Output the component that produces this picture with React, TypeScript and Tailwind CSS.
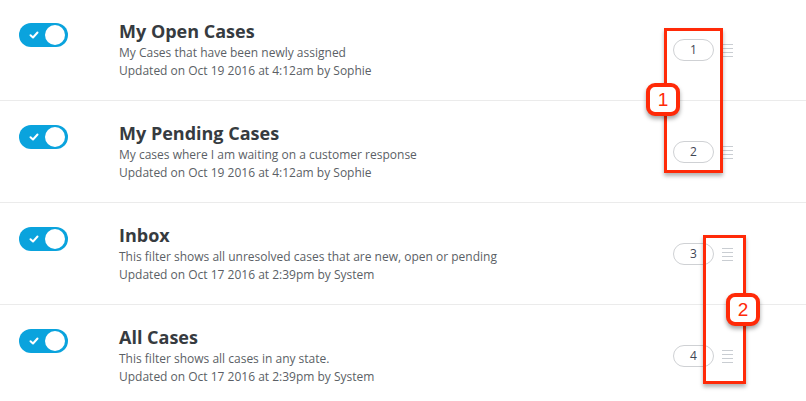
import React from 'react';

const filters = [
  {
    title: 'My Open Cases',
    description: 'My Cases that have been newly assigned',
    updated: 'Updated on Oct 19 2016 at 4:12am by Sophie',
    position: 1,
  },
  {
    title: 'My Pending Cases',
    description: 'My cases where I am waiting on a customer response',
    updated: 'Updated on Oct 19 2016 at 4:12am by Sophie',
    position: 2,
  },
  {
    title: 'Inbox',
    description: 'This filter shows all unresolved cases that are new, open or pending',
    updated: 'Updated on Oct 17 2016 at 2:39pm by System',
    position: 3,
  },
  {
    title: 'All Cases',
    description: 'This filter shows all cases in any state.',
    updated: 'Updated on Oct 17 2016 at 2:39pm by System',
    position: 4,
  },
];

const Toggle: React.FC = () => (
  <div className="relative w-[49px] h-[24px] rounded-full bg-[#0aa3dd] shrink-0">
    <svg className="absolute left-[10px] top-[8px]" width="10" height="8" viewBox="0 0 10 8">
      <path d="M1.5 4.2 L4 6.5 L8.5 1.5" fill="none" stroke="white" strokeWidth="2" strokeLinecap="round" strokeLinejoin="round" />
    </svg>
    <div className="absolute right-[3px] top-[2px] w-[20px] h-[20px] rounded-full bg-white" />
  </div>
);

const DragHandle: React.FC = () => (
  <div className="flex flex-col gap-[3px] w-[11px]">
    <div className="h-px bg-[#c9cdd2]" />
    <div className="h-px bg-[#c9cdd2]" />
    <div className="h-px bg-[#c9cdd2]" />
    <div className="h-px bg-[#c9cdd2]" />
  </div>
);

const Badge: React.FC<{ n: number; className: string }> = ({ n, className }) => (
  <div
    className={`absolute w-[34px] h-[33px] rounded-[9px] border-[4px] border-[#ff2a08] bg-white flex items-center justify-center text-[#ff2a08] text-[19px] leading-none shadow-[0_3px_4px_rgba(0,0,0,0.35)] ${className}`}
    style={{ fontFamily: '"Liberation Sans", Arial, sans-serif' }}
  >
    {n}
  </div>
);

const App: React.FC = () => {
  return (
    <div className="relative w-[806px] h-[401px] overflow-hidden bg-white" style={{ fontFamily: '"Open Sans", sans-serif' }}>
      <div className="-mt-px">
        {filters.map((f) => (
          <div key={f.position} className="h-[102px] border-b border-[#ebebeb] flex">
            <div className="pl-[19px] pt-[24px] w-[119px] shrink-0">
              <Toggle />
            </div>
            <div className="flex-1 pt-[20px]">
              <h3 className="text-[18px] leading-[24px] font-bold text-[#363b40]">{f.title}</h3>
              <p className="text-[12px] leading-[18px] text-[#5b5f66] mt-[1px]">{f.description}</p>
              <p className="text-[12px] leading-[18px] text-[#5b5f66]">{f.updated}</p>
            </div>
            <div className="flex items-center gap-[8px] pr-[73px] pt-[1px]">
              <div className="w-[41px] h-[22px] rounded-full border border-[#cfd1d4] flex items-center justify-center text-[12px] text-[#3f4654]">
                {f.position}
              </div>
              <DragHandle />
            </div>
          </div>
        ))}
      </div>

      {/* annotations */}
      <div className="absolute left-[664px] top-[28px] w-[59px] h-[145px] border-[3px] border-[#ff2a08] shadow-[0_3px_4px_rgba(0,0,0,0.3)]" />
      <Badge n={1} className="left-[646px] top-[83px]" />
      <div className="absolute left-[703px] top-[235px] w-[43px] h-[149px] border-[3px] border-[#ff2a08] shadow-[0_3px_4px_rgba(0,0,0,0.3)]" />
      <Badge n={2} className="left-[726px] top-[293px]" />
    </div>
  );
};

export default App;
